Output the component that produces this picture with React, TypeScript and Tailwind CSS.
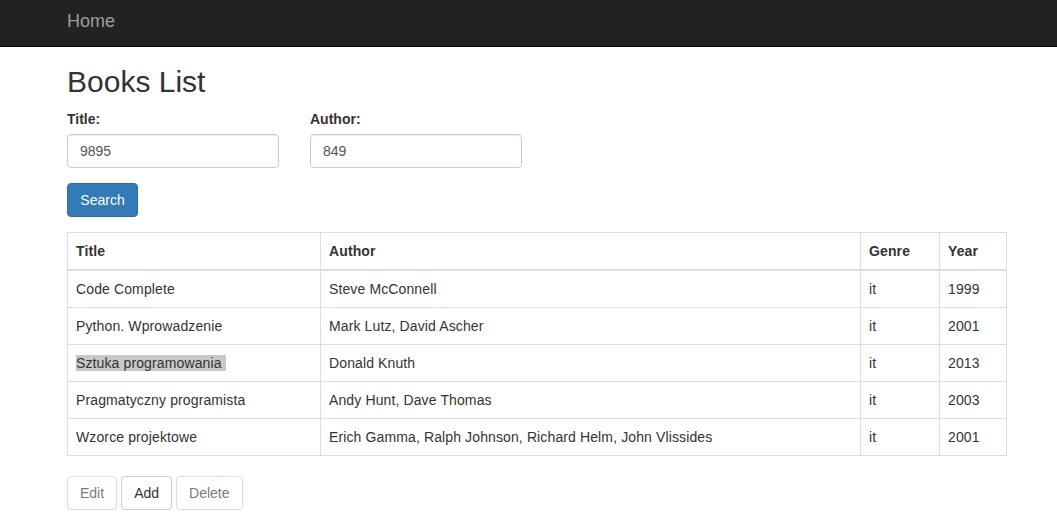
import React from "react";

type Book = {
  title: string;
  author: string;
  genre: string;
  year: string;
};

const books: Book[] = [
  { title: "Code Complete", author: "Steve McConnell", genre: "it", year: "1999" },
  { title: "Python. Wprowadzenie", author: "Mark Lutz, David Ascher", genre: "it", year: "2001" },
  { title: "Sztuka programowania", author: "Donald Knuth", genre: "it", year: "2013" },
  { title: "Pragmatyczny programista", author: "Andy Hunt, Dave Thomas", genre: "it", year: "2003" },
  {
    title: "Wzorce projektowe",
    author: "Erich Gamma, Ralph Johnson, Richard Helm, John Vlissides",
    genre: "it",
    year: "2001",
  },
];

const SELECTED = 2;

const App: React.FC = () => {
  return (
    <div className="min-h-screen bg-white font-['Liberation_Sans',Arial,sans-serif] text-[14px] leading-[20px] text-[#333]">
      <nav className="h-[47px] bg-[#222] border-b border-[#080808]">
        <div className="ml-[67px] w-[940px] pt-[11px]">
          <a href="#" className="text-[18px] leading-[20px] text-[#9d9d9d]">
            Home
          </a>
        </div>
      </nav>

      <div className="ml-[67px] w-[940px]">
        <h2 className="mt-[18px] mb-[11px] text-[30px] leading-[33px] font-normal">
          Books List
        </h2>

        <div className="flex gap-[31px]">
          <div className="w-[212px]">
            <label className="block mb-[5px] font-bold">Title:</label>
            <input
              defaultValue="9895"
              className="block w-full h-[34px] px-[12px] border border-[#ccc] rounded-[4px] text-[#555] shadow-[inset_0_1px_1px_rgba(0,0,0,0.075)] outline-none"
            />
          </div>
          <div className="w-[212px]">
            <label className="block mb-[5px] font-bold">Author:</label>
            <input
              defaultValue="849"
              className="block w-full h-[34px] px-[12px] border border-[#ccc] rounded-[4px] text-[#555] shadow-[inset_0_1px_1px_rgba(0,0,0,0.075)] outline-none"
            />
          </div>
        </div>

        <button className="mt-[15px] h-[34px] w-[71px] rounded-[4px] border border-[#2e6da4] bg-[#337ab7] text-white">
          Search
        </button>

        <table className="mt-[15px] w-full border-collapse border border-[#ddd] tracking-[0.12px]">
          <thead>
            <tr>
              <th className="w-[253px] p-[8px] text-left align-bottom font-bold border border-[#ddd] border-b-2">
                Title
              </th>
              <th className="w-[540px] p-[8px] text-left align-bottom font-bold border border-[#ddd] border-b-2">
                Author
              </th>
              <th className="w-[79px] p-[8px] text-left align-bottom font-bold border border-[#ddd] border-b-2">
                Genre
              </th>
              <th className="p-[8px] text-left align-bottom font-bold border border-[#ddd] border-b-2">
                Year
              </th>
            </tr>
          </thead>
          <tbody>
            {books.map((b, i) => (
              <tr key={b.title}>
                <td className="p-[8px] border border-[#ddd]">
                  {i === SELECTED ? (
                    <span className="bg-[#c8c8c8]">{b.title}{"\u00a0"}</span>
                  ) : (
                    b.title
                  )}
                </td>
                <td className="p-[8px] border border-[#ddd]">{b.author}</td>
                <td className="p-[8px] border border-[#ddd]">{b.genre}</td>
                <td className="p-[8px] border border-[#ddd]">{b.year}</td>
              </tr>
            ))}
          </tbody>
        </table>

        <div className="mt-[20px] flex gap-[4px]">
          <button
            disabled
            className="h-[34px] px-[12px] rounded-[4px] border border-[#ccc] bg-white text-[#333] opacity-65 cursor-not-allowed"
          >
            Edit
          </button>
          <button className="h-[34px] px-[12px] rounded-[4px] border border-[#ccc] bg-white text-[#333]">
            Add
          </button>
          <button
            disabled
            className="h-[34px] px-[12px] rounded-[4px] border border-[#ccc] bg-white text-[#333] opacity-65 cursor-not-allowed"
          >
            Delete
          </button>
        </div>
      </div>
    </div>
  );
};

export default App;
